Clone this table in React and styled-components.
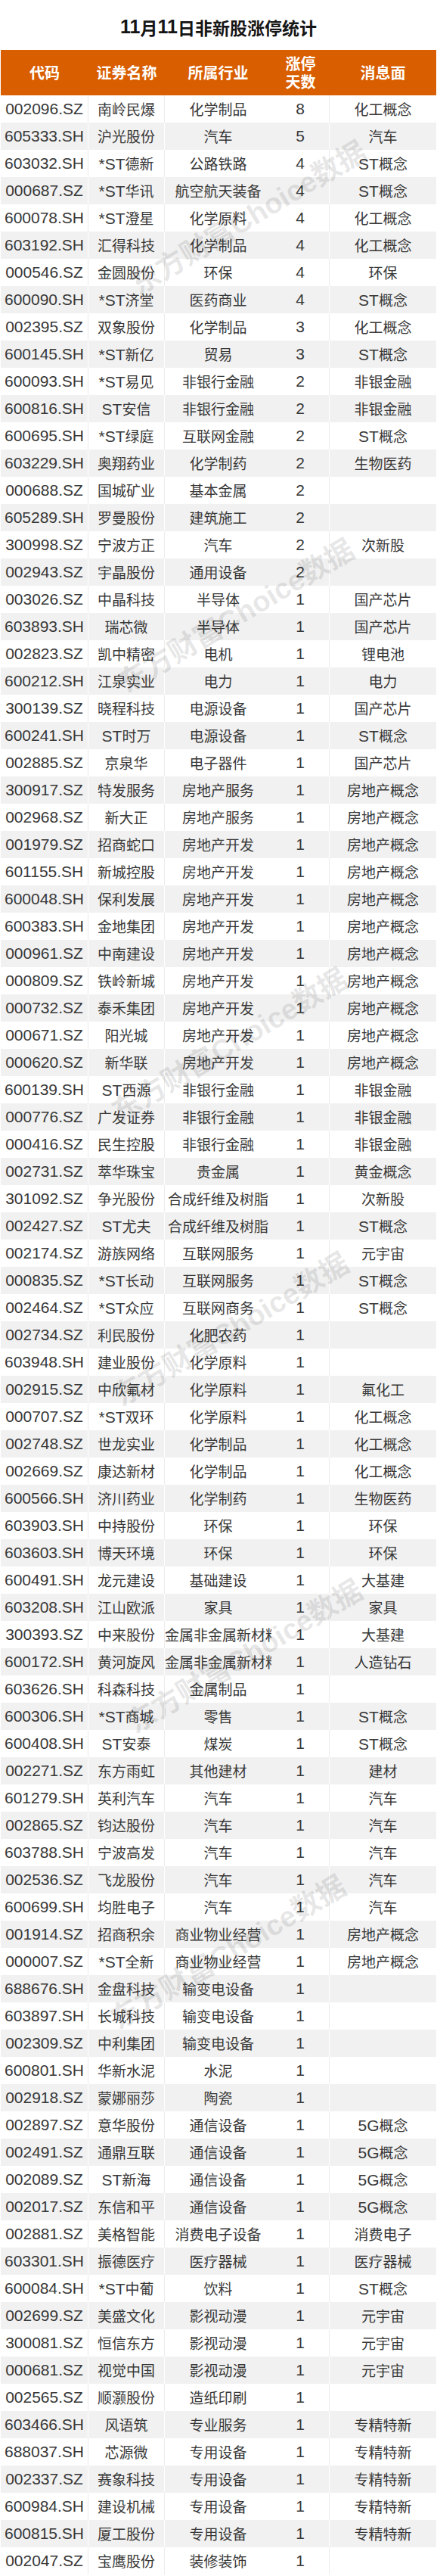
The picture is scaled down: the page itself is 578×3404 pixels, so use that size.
import React from 'react';
import styled, { createGlobalStyle } from 'styled-components';

const GlobalStyle = createGlobalStyle`
  html, body {
    margin: 0;
    padding: 0;
    background: #ffffff;
  }
  body {
    font-family: "Liberation Sans", Arial, "Noto Sans CJK SC", sans-serif;
  }
`;

const COLUMNS = '116px 101px 141px 77px 141px';

const Page = styled.div`
  position: relative;
  width: 578px;
  overflow: hidden;
`;

const Title = styled.h1`
  margin: 0;
  height: 66px;
  padding-top: 5px;
  box-sizing: border-box;
  display: flex;
  align-items: center;
  justify-content: center;
  font-size: 25px;
  font-weight: bold;
  color: #151515;
`;

const Table = styled.div`
  margin-left: 1px;
  width: 576px;
`;

const HeadRow = styled.div`
  display: grid;
  grid-template-columns: ${COLUMNS};
  height: 60px;
  background: #d95e00;
  color: #ffffff;
  font-weight: bold;
`;

const HeadCell = styled.div`
  display: flex;
  align-items: center;
  justify-content: center;
  text-align: center;
  white-space: pre-line;
  line-height: 24px;
`;

const Row = styled.div`
  display: grid;
  grid-template-columns: ${COLUMNS};
  height: 36px;
  background: ${({ $shaded }) => ($shaded ? '#f1f1f1' : '#ffffff')};
  color: #383838;
  font-size: 21px;
`;

const Cell = styled.div`
  height: 36px;
  line-height: 36px;
  text-align: center;
  white-space: nowrap;
  overflow: hidden;
  border-right: ${({ $divider, $shaded }) =>
    $divider ? `1px solid ${$shaded ? '#ffffff' : '#ebebeb'}` : 'none'};
`;

const Han = styled.span`
  font-family: "Noto Sans CJK SC", sans-serif;
  font-size: ${({ $size }) => $size}px;
`;

const Watermark = styled.div`
  position: absolute;
  left: ${({ $x }) => $x}px;
  top: ${({ $y }) => $y}px;
  transform: translate(-50%, -50%) rotate(-31deg);
  font-family: "Liberation Sans", "Noto Sans CJK SC", sans-serif;
  font-size: 38px;
  font-weight: bold;
  white-space: nowrap;
  color: rgba(0, 0, 0, 0.1);
  pointer-events: none;
`;

const HAN = /([\u2E80-\u9FFF\uFF00-\uFFEF]+)/;

const Mixed = ({ text, size }) =>
  text.split(HAN).map((part, i) =>
    HAN.test(part) ? <Han key={i} $size={size}>{part}</Han> : part
  );

const HEADERS = ['代码', '证券名称', '所属行业', '涨停\n天数', '消息面'];

// columns that draw a thin line on their right edge
const DIVIDERS = [true, true, false, true, false];

const ROWS = `002096.SZ|南岭民爆|化学制品|8|化工概念
605333.SH|沪光股份|汽车|5|汽车
603032.SH|*ST德新|公路铁路|4|ST概念
000687.SZ|*ST华讯|航空航天装备|4|ST概念
600078.SH|*ST澄星|化学原料|4|化工概念
603192.SH|汇得科技|化学制品|4|化工概念
000546.SZ|金圆股份|环保|4|环保
600090.SH|*ST济堂|医药商业|4|ST概念
002395.SZ|双象股份|化学制品|3|化工概念
600145.SH|*ST新亿|贸易|3|ST概念
600093.SH|*ST易见|非银行金融|2|非银金融
600816.SH|ST安信|非银行金融|2|非银金融
600695.SH|*ST绿庭|互联网金融|2|ST概念
603229.SH|奥翔药业|化学制药|2|生物医药
000688.SZ|国城矿业|基本金属|2|
605289.SH|罗曼股份|建筑施工|2|
300998.SZ|宁波方正|汽车|2|次新股
002943.SZ|宇晶股份|通用设备|2|
003026.SZ|中晶科技|半导体|1|国产芯片
603893.SH|瑞芯微|半导体|1|国产芯片
002823.SZ|凯中精密|电机|1|锂电池
600212.SH|江泉实业|电力|1|电力
300139.SZ|晓程科技|电源设备|1|国产芯片
600241.SH|ST时万|电源设备|1|ST概念
002885.SZ|京泉华|电子器件|1|国产芯片
300917.SZ|特发服务|房地产服务|1|房地产概念
002968.SZ|新大正|房地产服务|1|房地产概念
001979.SZ|招商蛇口|房地产开发|1|房地产概念
601155.SH|新城控股|房地产开发|1|房地产概念
600048.SH|保利发展|房地产开发|1|房地产概念
600383.SH|金地集团|房地产开发|1|房地产概念
000961.SZ|中南建设|房地产开发|1|房地产概念
000809.SZ|铁岭新城|房地产开发|1|房地产概念
000732.SZ|泰禾集团|房地产开发|1|房地产概念
000671.SZ|阳光城|房地产开发|1|房地产概念
000620.SZ|新华联|房地产开发|1|房地产概念
600139.SH|ST西源|非银行金融|1|非银金融
000776.SZ|广发证券|非银行金融|1|非银金融
000416.SZ|民生控股|非银行金融|1|非银金融
002731.SZ|萃华珠宝|贵金属|1|黄金概念
301092.SZ|争光股份|合成纤维及树脂|1|次新股
002427.SZ|ST尤夫|合成纤维及树脂|1|ST概念
002174.SZ|游族网络|互联网服务|1|元宇宙
000835.SZ|*ST长动|互联网服务|1|ST概念
002464.SZ|*ST众应|互联网商务|1|ST概念
002734.SZ|利民股份|化肥农药|1|
603948.SH|建业股份|化学原料|1|
002915.SZ|中欣氟材|化学原料|1|氟化工
000707.SZ|*ST双环|化学原料|1|化工概念
002748.SZ|世龙实业|化学制品|1|化工概念
002669.SZ|康达新材|化学制品|1|化工概念
600566.SH|济川药业|化学制药|1|生物医药
603903.SH|中持股份|环保|1|环保
603603.SH|博天环境|环保|1|环保
600491.SH|龙元建设|基础建设|1|大基建
603208.SH|江山欧派|家具|1|家具
300393.SZ|中来股份|金属非金属新材料|1|大基建
600172.SH|黄河旋风|金属非金属新材料|1|人造钻石
603626.SH|科森科技|金属制品|1|
600306.SH|*ST商城|零售|1|ST概念
600408.SH|ST安泰|煤炭|1|ST概念
002271.SZ|东方雨虹|其他建材|1|建材
601279.SH|英利汽车|汽车|1|汽车
002865.SZ|钧达股份|汽车|1|汽车
603788.SH|宁波高发|汽车|1|汽车
002536.SZ|飞龙股份|汽车|1|汽车
600699.SH|均胜电子|汽车|1|汽车
001914.SZ|招商积余|商业物业经营|1|房地产概念
000007.SZ|*ST全新|商业物业经营|1|房地产概念
688676.SH|金盘科技|输变电设备|1|
603897.SH|长城科技|输变电设备|1|
002309.SZ|中利集团|输变电设备|1|
600801.SH|华新水泥|水泥|1|
002918.SZ|蒙娜丽莎|陶瓷|1|
002897.SZ|意华股份|通信设备|1|5G概念
002491.SZ|通鼎互联|通信设备|1|5G概念
002089.SZ|ST新海|通信设备|1|5G概念
002017.SZ|东信和平|通信设备|1|5G概念
002881.SZ|美格智能|消费电子设备|1|消费电子
603301.SH|振德医疗|医疗器械|1|医疗器械
600084.SH|*ST中葡|饮料|1|ST概念
002699.SZ|美盛文化|影视动漫|1|元宇宙
300081.SZ|恒信东方|影视动漫|1|元宇宙
000681.SZ|视觉中国|影视动漫|1|元宇宙
002565.SZ|顺灏股份|造纸印刷|1|
603466.SH|风语筑|专业服务|1|专精特新
688037.SH|芯源微|专用设备|1|专精特新
002337.SZ|赛象科技|专用设备|1|专精特新
600984.SH|建设机械|专用设备|1|专精特新
600815.SH|厦工股份|专用设备|1|专精特新
002047.SZ|宝鹰股份|装修装饰|1|`
  .split('\n')
  .map((line) => line.split('|'));

const MARKS = [
  [327, 285],
  [311, 811],
  [302, 1378],
  [304, 1754],
  [322, 2186],
  [300, 2577],
];

export default function App() {
  return (
    <Page>
      <GlobalStyle />
      <Title>
        <Mixed text="11月11日非新股涨停统计" size={23} />
      </Title>
      <Table>
        <HeadRow>
          {HEADERS.map((h) => (
            <HeadCell key={h}>
              <Han $size={20}>{h}</Han>
            </HeadCell>
          ))}
        </HeadRow>
        {ROWS.map((row, r) => (
          <Row key={row[0]} $shaded={r % 2 === 1}>
            {row.map((value, c) => (
              <Cell key={c} $divider={DIVIDERS[c]} $shaded={r % 2 === 1}>
                <Mixed text={value} size={19} />
              </Cell>
            ))}
          </Row>
        ))}
      </Table>
      {MARKS.map(([x, y]) => (
        <Watermark key={y} $x={x} $y={y}>
          东方财富Choice数据
        </Watermark>
      ))}
    </Page>
  );
}
